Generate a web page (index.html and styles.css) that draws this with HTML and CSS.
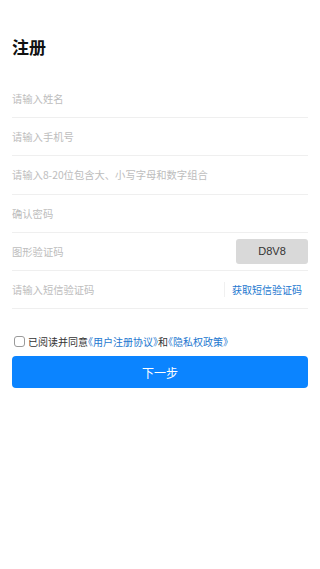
FILE: index.html
```html
<!DOCTYPE html>
<html lang="zh-CN">
<head>
<meta charset="utf-8">
<meta name="viewport" content="width=device-width, initial-scale=1">
<title>注册</title>
<link rel="stylesheet" href="styles.css">
</head>
<body>
<div class="page">
  <h1 class="title">注册</h1>
  <div class="form">
    <div class="row"><span class="ph">请输入姓名</span></div>
    <div class="row"><span class="ph">请输入手机号</span></div>
    <div class="row"><span class="ph">请输入8-20位包含大、小写字母和数字组合</span></div>
    <div class="row"><span class="ph">确认密码</span></div>
    <div class="row"><span class="ph">图形验证码</span><span class="captcha">D8V8</span></div>
    <div class="row"><span class="ph">请输入短信验证码</span><span class="sms"><span class="vline"></span><span class="sms-link">获取短信验证码</span></span></div>
  </div>
  <div class="agree">
    <span class="check"></span>
    <span class="agree-text">已阅读并同意<span class="link">《用户注册协议》</span>和<span class="link">《隐私权政策》</span></span>
  </div>
  <div class="btn">下一步</div>
</div>
</body>
</html>
```
FILE: styles.css
```css
html, body {
  margin: 0;
  padding: 0;
  background: #ffffff;
}
body {
  font-family: "Noto Sans CJK SC", "Noto Sans", sans-serif;
  color: #222;
}
.page {
  padding: 0 12px;
}
.title {
  margin: 35px 0 0;
  font-size: 17px;
  line-height: 24px;
  font-weight: 700;
  color: #111;
}
.form {
  margin-top: 21px;
}
.row {
  box-sizing: border-box;
  height: 38.2px;
  border-bottom: 1px solid #efefef;
  display: flex;
  align-items: center;
  justify-content: space-between;
}
.ph {
  font-size: 10.3px;
  color: #bdbdbd;
}
.captcha {
  width: 72px;
  height: 25px;
  background: #d9d9d9;
  border-radius: 3px;
  display: flex;
  align-items: center;
  justify-content: center;
  font-family: "Liberation Sans", Arial, sans-serif;
  font-size: 11px;
  color: #333;
}
.sms {
  display: flex;
  align-items: center;
  padding-right: 6px;
}
.vline {
  width: 1px;
  height: 15px;
  background: #f0f0f0;
  margin-right: 7px;
}
.sms-link {
  font-size: 10px;
  color: #2377cf;
}
.agree {
  margin-top: 22px;
  height: 20px;
  display: flex;
  align-items: center;
}
.check {
  box-sizing: border-box;
  width: 11px;
  height: 11px;
  margin-left: 2px;
  border: 1px solid #9a9a9a;
  border-radius: 3px;
  background: #fff;
}
.agree-text {
  margin-left: 3px;
  font-size: 10px;
  color: #333;
}
.link {
  color: #2377cf;
  font-feature-settings: "halt";
}
.btn {
  margin-top: 5px;
  height: 32px;
  border-radius: 4px;
  background: #0b84ff;
  color: #fff;
  font-size: 12px;
  display: flex;
  align-items: center;
  justify-content: center;
}
```
